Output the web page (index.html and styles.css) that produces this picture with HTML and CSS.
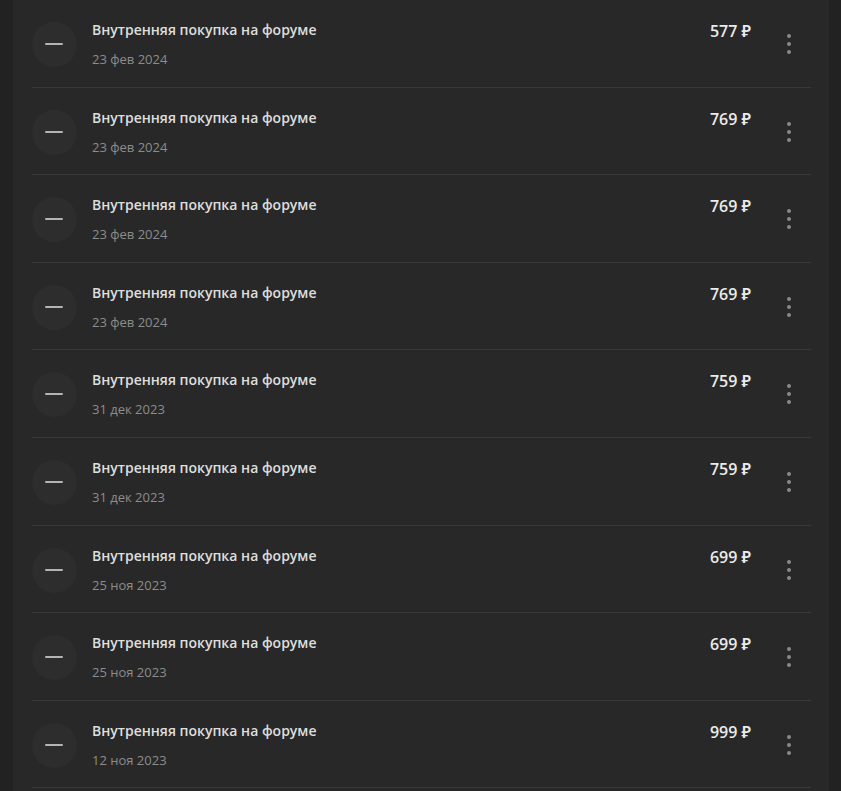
FILE: index.html
```html
<!DOCTYPE html>
<html lang="ru">
<head>
  <meta charset="UTF-8">
  <title>Операции</title>
  <link rel="stylesheet" href="styles.css">
</head>
<body>
  <div class="panel">
    <ul class="ops">
      <li class="op">
        <span class="op-icon"></span>
        <div class="op-info"><div class="op-title">Внутренняя покупка на форуме</div><div class="op-date">23 фев 2024</div></div>
        <div class="op-sum">577 ₽</div>
        <button class="op-menu"><i></i><i></i><i></i></button>
      </li>
      <li class="op">
        <span class="op-icon"></span>
        <div class="op-info"><div class="op-title">Внутренняя покупка на форуме</div><div class="op-date">23 фев 2024</div></div>
        <div class="op-sum">769 ₽</div>
        <button class="op-menu"><i></i><i></i><i></i></button>
      </li>
      <li class="op">
        <span class="op-icon"></span>
        <div class="op-info"><div class="op-title">Внутренняя покупка на форуме</div><div class="op-date">23 фев 2024</div></div>
        <div class="op-sum">769 ₽</div>
        <button class="op-menu"><i></i><i></i><i></i></button>
      </li>
      <li class="op">
        <span class="op-icon"></span>
        <div class="op-info"><div class="op-title">Внутренняя покупка на форуме</div><div class="op-date">23 фев 2024</div></div>
        <div class="op-sum">769 ₽</div>
        <button class="op-menu"><i></i><i></i><i></i></button>
      </li>
      <li class="op">
        <span class="op-icon"></span>
        <div class="op-info"><div class="op-title">Внутренняя покупка на форуме</div><div class="op-date">31 дек 2023</div></div>
        <div class="op-sum">759 ₽</div>
        <button class="op-menu"><i></i><i></i><i></i></button>
      </li>
      <li class="op">
        <span class="op-icon"></span>
        <div class="op-info"><div class="op-title">Внутренняя покупка на форуме</div><div class="op-date">31 дек 2023</div></div>
        <div class="op-sum">759 ₽</div>
        <button class="op-menu"><i></i><i></i><i></i></button>
      </li>
      <li class="op">
        <span class="op-icon"></span>
        <div class="op-info"><div class="op-title">Внутренняя покупка на форуме</div><div class="op-date">25 ноя 2023</div></div>
        <div class="op-sum">699 ₽</div>
        <button class="op-menu"><i></i><i></i><i></i></button>
      </li>
      <li class="op">
        <span class="op-icon"></span>
        <div class="op-info"><div class="op-title">Внутренняя покупка на форуме</div><div class="op-date">25 ноя 2023</div></div>
        <div class="op-sum">699 ₽</div>
        <button class="op-menu"><i></i><i></i><i></i></button>
      </li>
      <li class="op">
        <span class="op-icon"></span>
        <div class="op-info"><div class="op-title">Внутренняя покупка на форуме</div><div class="op-date">12 ноя 2023</div></div>
        <div class="op-sum">999 ₽</div>
        <button class="op-menu"><i></i><i></i><i></i></button>
      </li>
    </ul>
  </div>
</body>
</html>
```

FILE: styles.css
```css
body { margin: 0; background-color: #222222; font-family: "Open Sans", "Noto Sans", sans-serif; overflow: hidden; }
.panel {
  margin-left: 13px;
  width: 816px;
  min-height: 791px;
  background-color: #282828;
  padding: 0 18px 0 19px;
  box-sizing: border-box;
}
.ops { list-style: none; margin: 0; padding: 0; }
.op {
  display: flex;
  align-items: flex-start;
  height: 87.6px;
  box-sizing: border-box;
  padding-top: 20px;
  border-bottom: 1px solid #393939;
}
.op-icon {
  position: relative;
  flex: none;
  width: 45px;
  height: 45px;
  margin-top: 2px;
  border-radius: 50%;
  background-color: #2d2d2d;
}
.op-icon::after {
  content: "";
  position: absolute;
  left: 13px;
  top: 21px;
  width: 18px;
  height: 2px;
  border-radius: 1px;
  background-color: #b4b4b4;
}
.op-info { flex: 1; margin-left: 15px; }
.op-title { font-size: 14px; line-height: 20px; font-weight: 600; color: #dedede; }
.op-date { margin-top: 10px; font-size: 13px; line-height: 18px; color: #8c8c8c; }
.op-sum { font-size: 16px; line-height: 22px; font-weight: 600; color: #ebebeb; margin-right: 16px; }
.op-menu {
  flex: none;
  display: flex;
  flex-direction: column;
  align-items: center;
  justify-content: center;
  gap: 4px;
  width: 44px;
  height: 44px;
  margin-top: 2px;
  padding: 0;
  background: none;
  border: none;
  cursor: pointer;
}
.op-menu i { display: block; width: 4px; height: 4px; border-radius: 50%; background-color: #8a8a8a; }
```
